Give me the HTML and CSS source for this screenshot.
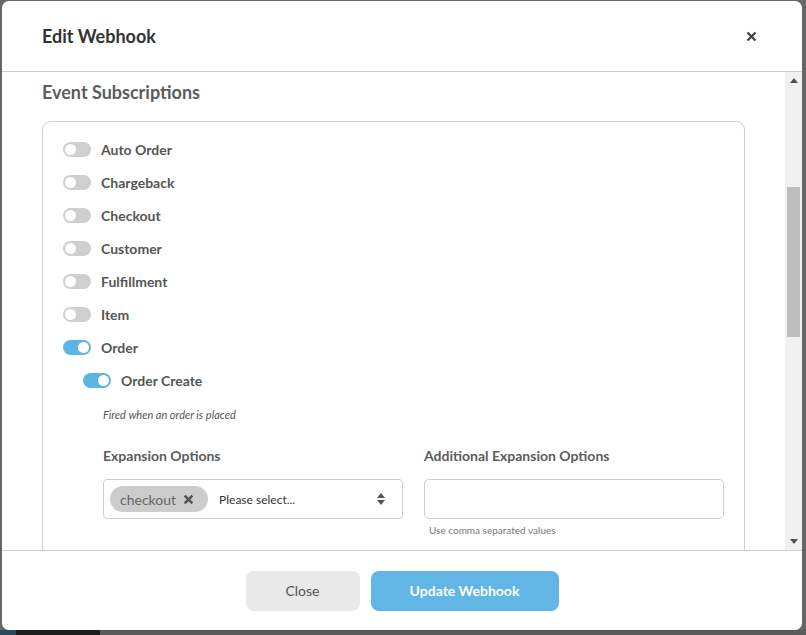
FILE: index.html
```html
<!DOCTYPE html>
<html>
<head>
<meta charset="utf-8">
<link rel="stylesheet" href="styles.css">
</head>
<body>
<div class="modal">
  <div class="modal-header">
    <h1 class="modal-title">Edit Webhook</h1>
    <svg class="close-x" width="11" height="11" viewBox="0 0 11 11"><path d="M1.5 1.5 L9.5 9.5 M9.5 1.5 L1.5 9.5" stroke="#454545" stroke-width="2.4" stroke-linecap="butt"/></svg>
  </div>
  <div class="modal-body">
    <div class="scroll-content">
      <h2 class="section-title">Event Subscriptions</h2>
      <div class="sub-box">
        <div class="toggle-row"><span class="toggle"></span><span class="toggle-label">Auto Order</span></div>
        <div class="toggle-row"><span class="toggle"></span><span class="toggle-label">Chargeback</span></div>
        <div class="toggle-row"><span class="toggle"></span><span class="toggle-label">Checkout</span></div>
        <div class="toggle-row"><span class="toggle"></span><span class="toggle-label">Customer</span></div>
        <div class="toggle-row"><span class="toggle"></span><span class="toggle-label">Fulfillment</span></div>
        <div class="toggle-row"><span class="toggle"></span><span class="toggle-label">Item</span></div>
        <div class="toggle-row"><span class="toggle on"></span><span class="toggle-label">Order</span></div>
        <div class="toggle-row sub"><span class="toggle on"></span><span class="toggle-label">Order Create</span></div>
        <div class="event-detail">
          <p class="event-desc">Fired when an order is placed</p>
          <div class="exp-grid">
            <div class="exp-col">
              <div class="field-label">Expansion Options</div>
              <div class="select-box">
                <span class="chip">checkout <svg class="chip-x" width="11" height="11" viewBox="0 0 10 10"><path d="M1.5 1.5 L8.5 8.5 M8.5 1.5 L1.5 8.5" stroke="#555" stroke-width="2.3"/></svg></span>
                <span class="placeholder">Please select...</span>
                <svg class="updown" width="8" height="12" viewBox="0 0 8 12"><path d="M0 5 L4 0 L8 5 Z M0 7 L4 12 L8 7 Z" fill="#555"/></svg>
              </div>
            </div>
            <div class="exp-col">
              <div class="field-label">Additional Expansion Options</div>
              <div class="text-input"></div>
              <div class="help">Use comma separated values</div>
            </div>
          </div>
        </div>
      </div>
    </div>
    <div class="scrollbar">
      <div class="sb-btn"><svg width="8" height="5" viewBox="0 0 8 5"><path d="M0 5 L4 0 L8 5 Z" fill="#505050"/></svg></div>
      <div class="sb-track">
        <div class="sb-thumb"></div>
      </div>
      <div class="sb-btn"><svg width="8" height="5" viewBox="0 0 8 5"><path d="M0 0 L4 5 L8 0 Z" fill="#505050"/></svg></div>
    </div>
  </div>
  <div class="modal-footer">
    <button class="btn btn-close">Close</button>
    <button class="btn btn-primary">Update Webhook</button>
  </div>
</div>
<div class="page-strip"></div>
</body>
</html>
```

FILE: styles.css
```css
html, body {
  margin: 0;
  padding: 0;
}
body {
  background: #666666;
  font-family: Lato, "Open Sans", sans-serif;
  width: 806px;
  height: 635px;
  overflow: hidden;
  padding-top: 1px;
  box-sizing: border-box;
}
.modal {
  margin-left: 2px;
  width: 800px;
  height: 629px;
  background: #fff;
  border-radius: 7px;
  display: flex;
  flex-direction: column;
  overflow: hidden;
}
.modal-header {
  height: 70px;
  flex: none;
  border-bottom: 1px solid #cfcfcf;
  display: flex;
  align-items: center;
  justify-content: space-between;
  padding: 0 45px 0 40px;
}
.modal-title {
  margin: 0;
  font-size: 18px;
  font-weight: 700;
  color: #333;
}
.close-x {
  display: block;
}
.modal-body {
  height: 478px;
  flex: none;
  display: flex;
  border-bottom: 1px solid #cfcfcf;
}
.scroll-content {
  flex: 1;
  overflow: hidden;
  padding: 8px 40px 0 40px;
}
.section-title {
  margin: 0 0 17px 0;
  font-size: 18px;
  line-height: 24px;
  font-weight: 700;
  color: #5c5c5c;
}
.sub-box {
  border: 1px solid #cfcfcf;
  border-radius: 9px;
  padding: 11px 21px 40px 20px;
}
.toggle-row {
  height: 33px;
  display: flex;
  align-items: center;
  gap: 10px;
}
.toggle-row.sub {
  padding-left: 20px;
}
.toggle {
  width: 28px;
  height: 15px;
  border-radius: 8px;
  background: #cfcfcf;
  box-sizing: border-box;
  padding: 2px;
  display: flex;
  justify-content: flex-start;
}
.toggle::after {
  content: "";
  width: 11px;
  height: 11px;
  border-radius: 50%;
  background: #fff;
}
.toggle.on {
  background: #5db5e6;
  justify-content: flex-end;
}
.toggle-label {
  font-size: 14px;
  font-weight: 700;
  color: #555;
}
.event-detail {
  padding-left: 40px;
}
.event-desc {
  margin: 10px 0 0 0;
  font-size: 11px;
  line-height: 16px;
  font-style: italic;
  color: #555;
}
.exp-grid {
  display: grid;
  grid-template-columns: 300px 300px;
  column-gap: 21px;
  margin-top: 23px;
}
.field-label {
  font-size: 14px;
  line-height: 20px;
  font-weight: 700;
  color: #5c5c5c;
  margin-bottom: 13px;
}
.select-box {
  height: 40px;
  box-sizing: border-box;
  border: 1px solid #cfcfcf;
  border-radius: 4px;
  display: flex;
  align-items: center;
  padding: 0 17px 0 6px;
}
.chip {
  height: 26px;
  border-radius: 13px;
  background: #cccccc;
  display: inline-flex;
  align-items: center;
  padding: 0 14px 0 10px;
  font-size: 14px;
  color: #666;
  gap: 7px;
}
.chip-x {
  display: block;
}
.placeholder {
  margin-left: 11px;
  font-size: 12px;
  color: #333;
  flex: 1;
}
.updown {
  display: block;
}
.text-input {
  height: 40px;
  box-sizing: border-box;
  border: 1px solid #cfcfcf;
  border-radius: 5px;
}
.help {
  margin-top: 4px;
  padding-left: 5px;
  font-size: 10px;
  line-height: 14px;
  color: #777;
}
.scrollbar {
  width: 17px;
  flex: none;
  background: #f1f1f1;
  display: flex;
  flex-direction: column;
}
.sb-btn {
  height: 17px;
  display: flex;
  align-items: center;
  justify-content: center;
}
.sb-track {
  flex: 1;
  padding: 0 2px;
}
.sb-thumb {
  margin-top: 98px;
  height: 150px;
  background: #bdbdbd;
}
.modal-footer {
  flex: 1;
  display: flex;
  justify-content: center;
  align-items: center;
  gap: 11px;
}
.btn {
  height: 40px;
  border: none;
  border-radius: 8px;
  font-family: Lato, "Open Sans", sans-serif;
  font-size: 14px;
}
.btn-close {
  width: 114px;
  background: #e9e9e9;
  color: #555;
}
.btn-primary {
  width: 188px;
  background: #62b6e5;
  color: #fff;
  font-weight: 700;
}
.page-strip {
  height: 5px;
  background: linear-gradient(to right, #2b4a5c 0 16px, #1b1b1b 16px 100px, #5a5a5a 100px);
}
```
